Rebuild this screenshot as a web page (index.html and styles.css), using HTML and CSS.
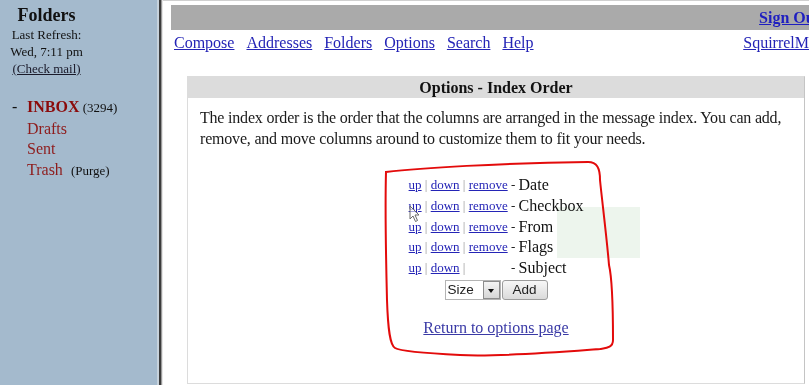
FILE: index.html
```html
<!DOCTYPE html>
<html>
<head>
<meta charset="utf-8">
<title>SquirrelMail - Options - Index Order</title>
<link rel="stylesheet" href="styles.css">
</head>
<body>
<div class="page">
  <aside class="sidebar">
    <div class="sb-head">
      <div class="sb-title">Folders</div>
      <div class="sb-line">Last Refresh:</div>
      <div class="sb-line">Wed, 7:11 pm</div>
      <div class="sb-line"><a class="check" href="#">(Check mail)</a></div>
    </div>
    <ul class="folders">
      <li><span class="mark">-</span><a class="folder inbox" href="#">INBOX</a><small> (3294)</small></li>
      <li><span class="mark"></span><a class="folder" href="#">Drafts</a></li>
      <li><span class="mark"></span><a class="folder" href="#">Sent</a></li>
      <li><span class="mark"></span><a class="folder" href="#">Trash</a>&nbsp;&nbsp;<small>(Purge)</small></li>
    </ul>
  </aside>
  <div class="frame-border"></div>
  <main class="main">
    <div class="topbar"><a class="signout" href="#">Sign Out</a></div>
    <nav class="nav">
      <div class="nav-links">
        <a href="#">Compose</a>
        <a href="#">Addresses</a>
        <a href="#">Folders</a>
        <a href="#">Options</a>
        <a href="#">Search</a>
        <a href="#">Help</a>
      </div>
      <a class="brand" href="#">SquirrelMail</a>
    </nav>
    <section class="box">
      <h2 class="box-title">Options - Index Order</h2>
      <p class="intro">The index order is the order that the columns are arranged in the message index. You can add, remove, and move columns around to customize them to fit your needs.</p>
      <table class="order">
        <tr><td><a href="#">up</a></td><td class="sep">&nbsp;|&nbsp;</td><td><a href="#">down</a></td><td class="sep">&nbsp;|&nbsp;</td><td><a href="#">remove</a></td><td>&nbsp;-&nbsp;</td><td class="name">Date</td></tr>
        <tr><td><a href="#">up</a></td><td class="sep">&nbsp;|&nbsp;</td><td><a href="#">down</a></td><td class="sep">&nbsp;|&nbsp;</td><td><a href="#">remove</a></td><td>&nbsp;-&nbsp;</td><td class="name">Checkbox</td></tr>
        <tr><td><a href="#">up</a></td><td class="sep">&nbsp;|&nbsp;</td><td><a href="#">down</a></td><td class="sep">&nbsp;|&nbsp;</td><td><a href="#">remove</a></td><td>&nbsp;-&nbsp;</td><td class="name">From</td></tr>
        <tr><td><a href="#">up</a></td><td class="sep">&nbsp;|&nbsp;</td><td><a href="#">down</a></td><td class="sep">&nbsp;|&nbsp;</td><td><a href="#">remove</a></td><td>&nbsp;-&nbsp;</td><td class="name">Flags</td></tr>
        <tr><td><a href="#">up</a></td><td class="sep">&nbsp;|&nbsp;</td><td><a href="#">down</a></td><td class="sep">&nbsp;|&nbsp;</td><td></td><td>&nbsp;-&nbsp;</td><td class="name">Subject</td></tr>
      </table>
      <form class="add-row">
        <span class="select"><select><option>Size</option></select><span class="caret"></span></span>
        <button type="button" class="add">Add</button>
      </form>
      <p class="return"><a href="#">Return to options page</a></p>
    </section>
  </main>
</div>
<div class="glare"></div>
<svg class="annot" width="809" height="385" viewBox="0 0 809 385">
  <path d="M386 172 C420 168 500 163 588 162 C597 162 600 168 600 180 C602 200 607 240 609 265 C613 282 613 320 613 340 C613 348 606 348 600 349 C560 352 500 357 460 355 C420 353 400 351 395 348 C390 345 388 330 387 300 C386 260 385 210 386 172 Z" fill="none" stroke="#e30b0b" stroke-width="2"/>
</svg>
<svg class="cursor" width="12" height="18" viewBox="0 0 12 18">
  <path d="M1 1 L1 14 L4 11 L6.5 16.5 L8.5 15.5 L6 10 L10 10 Z" fill="rgba(255,255,255,0.6)" stroke="#6a6a6a" stroke-width="1"/>
</svg>
</body>
</html>
```

FILE: styles.css
```css
body {
  margin: 0;
  width: 809px;
  height: 385px;
  overflow: hidden;
  position: relative;
  background: #fff;
  color: #111;
  font-family: "Liberation Serif", "Times New Roman", serif;
}

a {
  color: #2424b6;
}

.page {
  display: flex;
  height: 385px;
}

/* ---------- left folder frame ---------- */
.sidebar {
  flex: none;
  width: 157px;
  box-sizing: border-box;
  padding-top: 4px;
  background: #a4bacd;
}

.sb-head {
  width: 93px;
  text-align: center;
}

.sb-title {
  font-size: 18px;
  font-weight: bold;
  line-height: 22px;
}

.sb-line {
  font-size: 13px;
  line-height: 17px;
}

.check {
  color: #1a1a2a;
}

.folders {
  list-style: none;
  margin: 20px 0 0;
  padding: 0 0 0 12px;
  font-size: 16px;
  line-height: 20.7px;
}

.mark {
  display: inline-block;
  width: 15px;
}

.folder {
  color: #8e1c1c;
  text-decoration: none;
}

.inbox {
  font-weight: bold;
  color: #8b0a0a;
}

.folders small {
  font-size: 13px;
  color: #111;
}

.frame-border {
  flex: none;
  width: 6px;
  background: linear-gradient(to right, #c6d2dc 0 2px, #3c3c3c 2px 4px, #9a9a9a 4px 5px, #e6e6e6 5px 6px);
}

/* ---------- right frame ---------- */
.main {
  flex: none;
  width: 660px;
  padding-left: 8px;
  border-top: 1px solid #d0d0d0;
}

.topbar {
  margin-top: 4px;
  height: 25px;
  background: #aaaaaa;
  display: flex;
  justify-content: flex-end;
  align-items: center;
  padding-right: 11px;
}

.signout {
  font-size: 16px;
  font-weight: bold;
  color: #1e1ec0;
}

.nav {
  display: flex;
  justify-content: space-between;
  margin-top: 3px;
  padding: 0 6px 0 3px;
  font-size: 16px;
  line-height: 20px;
}

.nav-links {
  display: flex;
  gap: 12px;
}

.box {
  margin: 23px 26px 0 16px;
  height: 308px;
  box-sizing: border-box;
  border: 1px solid #dcdcdc;
  border-right-color: #c4c4c4;
}

.box-title {
  margin: 0;
  background: #dcdcdc;
  font-size: 16px;
  line-height: 21px;
  font-weight: bold;
  text-align: center;
}

.intro {
  margin: 9px 8px 0 12px;
  font-size: 16px;
  line-height: 21px;
  letter-spacing: -0.2px;
  color: #1a1a1a;
}

.order {
  margin: 26px auto 0;
  border-collapse: collapse;
}

.order td {
  padding: 0;
  font-size: 13px;
  line-height: 20.75px;
  white-space: nowrap;
}

.order td.name {
  font-size: 16px;
}

.order td.sep {
  color: #9a9a9a;
}

.add-row {
  display: flex;
  justify-content: center;
  gap: 1px;
  margin: 1px 0 0;
  height: 20px;
}

.select {
  display: flex;
  width: 56px;
  height: 20px;
  box-sizing: border-box;
  border: 1px solid #b4b4b4;
  background: #fff;
}

.select select {
  appearance: none;
  -webkit-appearance: none;
  flex: 1;
  min-width: 0;
  height: 18px;
  border: 0;
  padding: 0 0 0 2px;
  background: transparent;
  color: #222;
  font: 13.5px "Liberation Sans", Arial, sans-serif;
  outline: none;
}

.caret {
  position: relative;
  width: 17px;
  border: 1px solid #8c8c8c;
  box-sizing: border-box;
  background: linear-gradient(#f4f4f4, #d6d6d6);
}

.caret::after {
  content: "";
  position: absolute;
  left: 4px;
  top: 7px;
  border-left: 3.5px solid transparent;
  border-right: 3.5px solid transparent;
  border-top: 4px solid #111;
}

.add {
  width: 46px;
  height: 20px;
  padding: 0;
  border: 1px solid #9c9c9c;
  border-radius: 3px;
  background: linear-gradient(#f7f7f7, #dadada);
  color: #222;
  font: 13.5px "Liberation Sans", Arial, sans-serif;
}

.return {
  margin: 17.5px 0 0;
  text-align: center;
  font-size: 16px;
  line-height: 21px;
}

.return a {
  color: #3a3aa6;
}

/* ---------- overlays on the screen recording ---------- */
.glare {
  position: absolute;
  left: 557px;
  top: 207px;
  width: 83px;
  height: 51px;
  background: #edf5ed;
  mix-blend-mode: multiply;
  pointer-events: none;
}

.annot {
  position: absolute;
  left: 0;
  top: 0;
  pointer-events: none;
}

.cursor {
  position: absolute;
  left: 409px;
  top: 205px;
  pointer-events: none;
}
```
